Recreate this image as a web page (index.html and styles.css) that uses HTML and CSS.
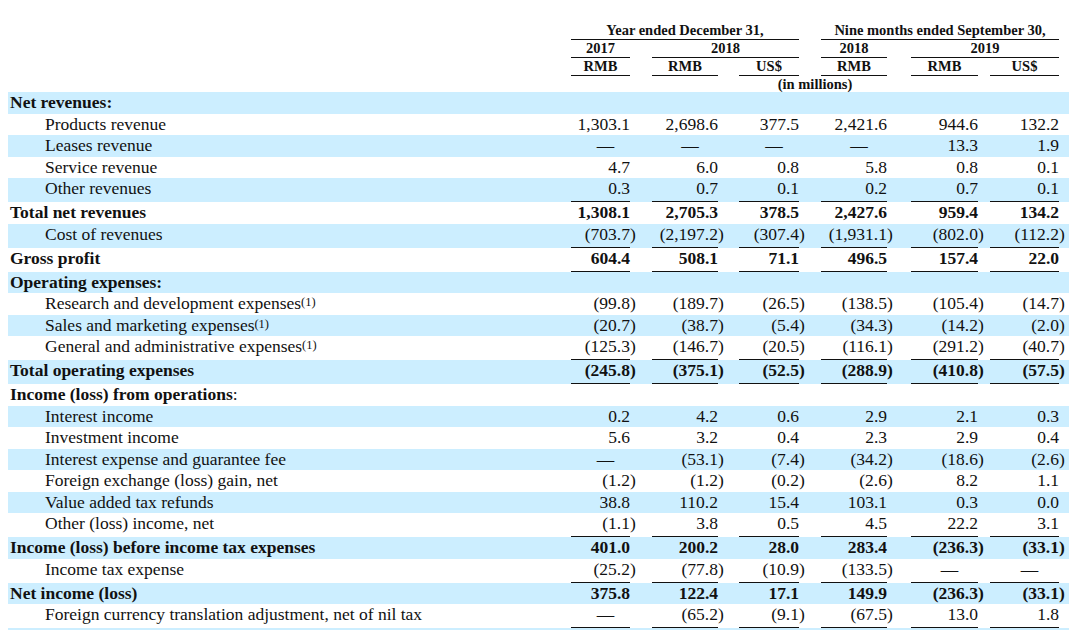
FILE: index.html
```html
<!DOCTYPE html>
<html lang="en">
<head>
<meta charset="utf-8">
<title>Selected consolidated statements of operations data</title>
<link rel="stylesheet" href="styles.css">
</head>
<body>
<div class="sheet">
  <div class="row hrow">
    <div class="lab"></div>
    <div class="c1 s3"><span class="h">Year ended December 31,</span></div>
    <div class="c4 s3"><span class="h">Nine months ended September 30,</span></div>
  </div>
  <div class="row hrow">
    <div class="lab"></div>
    <div class="c1"><span class="h">2017</span></div>
    <div class="c2 s2"><span class="h">2018</span></div>
    <div class="c4"><span class="h">2018</span></div>
    <div class="c5 s2"><span class="h">2019</span></div>
  </div>
  <div class="row hrow">
    <div class="lab"></div>
    <div class="c1"><span class="h">RMB</span></div>
    <div class="c2"><span class="h">RMB</span></div>
    <div class="c3"><span class="h">US$</span></div>
    <div class="c4"><span class="h">RMB</span></div>
    <div class="c5"><span class="h">RMB</span></div>
    <div class="c6"><span class="h">US$</span></div>
  </div>
  <div class="row hrow">
    <div class="lab"></div>
    <div class="c1 s6"><span class="h nol">(in millions)</span></div>
  </div>

  <div class="row shade"><div class="lab b">Net revenues:</div></div>
  <div class="row">
    <div class="lab ind">Products revenue</div>
    <div class="c1"><span class="n">1,303.1</span></div>
    <div class="c2"><span class="n">2,698.6</span></div>
    <div class="c3"><span class="n">377.5</span></div>
    <div class="c4"><span class="n">2,421.6</span></div>
    <div class="c5"><span class="n">944.6</span></div>
    <div class="c6"><span class="n">132.2</span></div>
  </div>
  <div class="row shade">
    <div class="lab ind">Leases revenue</div>
    <div class="c1"><span class="n d">—</span></div>
    <div class="c2"><span class="n d">—</span></div>
    <div class="c3"><span class="n d">—</span></div>
    <div class="c4"><span class="n d">—</span></div>
    <div class="c5"><span class="n">13.3</span></div>
    <div class="c6"><span class="n">1.9</span></div>
  </div>
  <div class="row">
    <div class="lab ind">Service revenue</div>
    <div class="c1"><span class="n">4.7</span></div>
    <div class="c2"><span class="n">6.0</span></div>
    <div class="c3"><span class="n">0.8</span></div>
    <div class="c4"><span class="n">5.8</span></div>
    <div class="c5"><span class="n">0.8</span></div>
    <div class="c6"><span class="n">0.1</span></div>
  </div>
  <div class="row shade ul">
    <div class="lab ind">Other revenues</div>
    <div class="c1"><span class="n">0.3</span></div>
    <div class="c2"><span class="n">0.7</span></div>
    <div class="c3"><span class="n">0.1</span></div>
    <div class="c4"><span class="n">0.2</span></div>
    <div class="c5"><span class="n">0.7</span></div>
    <div class="c6"><span class="n">0.1</span></div>
  </div>
  <div class="row bold">
    <div class="lab">Total net revenues</div>
    <div class="c1"><span class="n">1,308.1</span></div>
    <div class="c2"><span class="n">2,705.3</span></div>
    <div class="c3"><span class="n">378.5</span></div>
    <div class="c4"><span class="n">2,427.6</span></div>
    <div class="c5"><span class="n">959.4</span></div>
    <div class="c6"><span class="n">134.2</span></div>
  </div>
  <div class="row shade ul">
    <div class="lab ind">Cost of revenues</div>
    <div class="c1"><span class="n">(703.7<span class="rp">)</span></span></div>
    <div class="c2"><span class="n">(2,197.2<span class="rp">)</span></span></div>
    <div class="c3"><span class="n">(307.4<span class="rp">)</span></span></div>
    <div class="c4"><span class="n">(1,931.1<span class="rp">)</span></span></div>
    <div class="c5"><span class="n">(802.0<span class="rp">)</span></span></div>
    <div class="c6"><span class="n">(112.2<span class="rp">)</span></span></div>
  </div>
  <div class="row bold ul">
    <div class="lab">Gross profit</div>
    <div class="c1"><span class="n">604.4</span></div>
    <div class="c2"><span class="n">508.1</span></div>
    <div class="c3"><span class="n">71.1</span></div>
    <div class="c4"><span class="n">496.5</span></div>
    <div class="c5"><span class="n">157.4</span></div>
    <div class="c6"><span class="n">22.0</span></div>
  </div>
  <div class="row shade"><div class="lab b">Operating expenses:</div></div>
  <div class="row">
    <div class="lab ind">Research and development expenses<sup class="fn">(1)</sup></div>
    <div class="c1"><span class="n">(99.8<span class="rp">)</span></span></div>
    <div class="c2"><span class="n">(189.7<span class="rp">)</span></span></div>
    <div class="c3"><span class="n">(26.5<span class="rp">)</span></span></div>
    <div class="c4"><span class="n">(138.5<span class="rp">)</span></span></div>
    <div class="c5"><span class="n">(105.4<span class="rp">)</span></span></div>
    <div class="c6"><span class="n">(14.7<span class="rp">)</span></span></div>
  </div>
  <div class="row shade">
    <div class="lab ind">Sales and marketing expenses<sup class="fn">(1)</sup></div>
    <div class="c1"><span class="n">(20.7<span class="rp">)</span></span></div>
    <div class="c2"><span class="n">(38.7<span class="rp">)</span></span></div>
    <div class="c3"><span class="n">(5.4<span class="rp">)</span></span></div>
    <div class="c4"><span class="n">(34.3<span class="rp">)</span></span></div>
    <div class="c5"><span class="n">(14.2<span class="rp">)</span></span></div>
    <div class="c6"><span class="n">(2.0<span class="rp">)</span></span></div>
  </div>
  <div class="row ul">
    <div class="lab ind">General and administrative expenses<sup class="fn">(1)</sup></div>
    <div class="c1"><span class="n">(125.3<span class="rp">)</span></span></div>
    <div class="c2"><span class="n">(146.7<span class="rp">)</span></span></div>
    <div class="c3"><span class="n">(20.5<span class="rp">)</span></span></div>
    <div class="c4"><span class="n">(116.1<span class="rp">)</span></span></div>
    <div class="c5"><span class="n">(291.2<span class="rp">)</span></span></div>
    <div class="c6"><span class="n">(40.7<span class="rp">)</span></span></div>
  </div>
  <div class="row shade bold ul">
    <div class="lab">Total operating expenses</div>
    <div class="c1"><span class="n">(245.8<span class="rp">)</span></span></div>
    <div class="c2"><span class="n">(375.1<span class="rp">)</span></span></div>
    <div class="c3"><span class="n">(52.5<span class="rp">)</span></span></div>
    <div class="c4"><span class="n">(288.9<span class="rp">)</span></span></div>
    <div class="c5"><span class="n">(410.8<span class="rp">)</span></span></div>
    <div class="c6"><span class="n">(57.5<span class="rp">)</span></span></div>
  </div>
  <div class="row"><div class="lab"><b>Income (loss) from operations</b>:</div></div>
  <div class="row shade">
    <div class="lab ind">Interest income</div>
    <div class="c1"><span class="n">0.2</span></div>
    <div class="c2"><span class="n">4.2</span></div>
    <div class="c3"><span class="n">0.6</span></div>
    <div class="c4"><span class="n">2.9</span></div>
    <div class="c5"><span class="n">2.1</span></div>
    <div class="c6"><span class="n">0.3</span></div>
  </div>
  <div class="row">
    <div class="lab ind">Investment income</div>
    <div class="c1"><span class="n">5.6</span></div>
    <div class="c2"><span class="n">3.2</span></div>
    <div class="c3"><span class="n">0.4</span></div>
    <div class="c4"><span class="n">2.3</span></div>
    <div class="c5"><span class="n">2.9</span></div>
    <div class="c6"><span class="n">0.4</span></div>
  </div>
  <div class="row shade">
    <div class="lab ind">Interest expense and guarantee fee</div>
    <div class="c1"><span class="n d">—</span></div>
    <div class="c2"><span class="n">(53.1<span class="rp">)</span></span></div>
    <div class="c3"><span class="n">(7.4<span class="rp">)</span></span></div>
    <div class="c4"><span class="n">(34.2<span class="rp">)</span></span></div>
    <div class="c5"><span class="n">(18.6<span class="rp">)</span></span></div>
    <div class="c6"><span class="n">(2.6<span class="rp">)</span></span></div>
  </div>
  <div class="row">
    <div class="lab ind">Foreign exchange (loss) gain, net</div>
    <div class="c1"><span class="n">(1.2<span class="rp">)</span></span></div>
    <div class="c2"><span class="n">(1.2<span class="rp">)</span></span></div>
    <div class="c3"><span class="n">(0.2<span class="rp">)</span></span></div>
    <div class="c4"><span class="n">(2.6<span class="rp">)</span></span></div>
    <div class="c5"><span class="n">8.2</span></div>
    <div class="c6"><span class="n">1.1</span></div>
  </div>
  <div class="row shade">
    <div class="lab ind">Value added tax refunds</div>
    <div class="c1"><span class="n">38.8</span></div>
    <div class="c2"><span class="n">110.2</span></div>
    <div class="c3"><span class="n">15.4</span></div>
    <div class="c4"><span class="n">103.1</span></div>
    <div class="c5"><span class="n">0.3</span></div>
    <div class="c6"><span class="n">0.0</span></div>
  </div>
  <div class="row ul">
    <div class="lab ind">Other (loss) income, net</div>
    <div class="c1"><span class="n">(1.1<span class="rp">)</span></span></div>
    <div class="c2"><span class="n">3.8</span></div>
    <div class="c3"><span class="n">0.5</span></div>
    <div class="c4"><span class="n">4.5</span></div>
    <div class="c5"><span class="n">22.2</span></div>
    <div class="c6"><span class="n">3.1</span></div>
  </div>
  <div class="row shade bold">
    <div class="lab">Income (loss) before income tax expenses</div>
    <div class="c1"><span class="n">401.0</span></div>
    <div class="c2"><span class="n">200.2</span></div>
    <div class="c3"><span class="n">28.0</span></div>
    <div class="c4"><span class="n">283.4</span></div>
    <div class="c5"><span class="n">(236.3<span class="rp">)</span></span></div>
    <div class="c6"><span class="n">(33.1<span class="rp">)</span></span></div>
  </div>
  <div class="row ul">
    <div class="lab ind">Income tax expense</div>
    <div class="c1"><span class="n">(25.2<span class="rp">)</span></span></div>
    <div class="c2"><span class="n">(77.8<span class="rp">)</span></span></div>
    <div class="c3"><span class="n">(10.9<span class="rp">)</span></span></div>
    <div class="c4"><span class="n">(133.5<span class="rp">)</span></span></div>
    <div class="c5"><span class="n d">—</span></div>
    <div class="c6"><span class="n d">—</span></div>
  </div>
  <div class="row shade bold">
    <div class="lab">Net income (loss)</div>
    <div class="c1"><span class="n">375.8</span></div>
    <div class="c2"><span class="n">122.4</span></div>
    <div class="c3"><span class="n">17.1</span></div>
    <div class="c4"><span class="n">149.9</span></div>
    <div class="c5"><span class="n">(236.3<span class="rp">)</span></span></div>
    <div class="c6"><span class="n">(33.1<span class="rp">)</span></span></div>
  </div>
  <div class="row ul">
    <div class="lab ind">Foreign currency translation adjustment, net of nil tax</div>
    <div class="c1"><span class="n d">—</span></div>
    <div class="c2"><span class="n">(65.2<span class="rp">)</span></span></div>
    <div class="c3"><span class="n">(9.1<span class="rp">)</span></span></div>
    <div class="c4"><span class="n">(67.5<span class="rp">)</span></span></div>
    <div class="c5"><span class="n">13.0</span></div>
    <div class="c6"><span class="n">1.8</span></div>
  </div>
  <div class="row shade"><div class="lab">&nbsp;</div></div>
</div>
</body>
</html>
```

FILE: styles.css
```css
html, body {
  margin: 0;
  padding: 0;
  background: #ffffff;
}

body {
  font-family: "Liberation Serif", "Times New Roman", serif;
  color: #111111;
  overflow: hidden;
}

.sheet {
  width: 1061px;
  padding: 22px 0 0 8px;
}

.row {
  display: grid;
  grid-template-columns: 563px 59px 88px 81px 88px 91px 81px 10px;
  font-size: 17.5px;
  line-height: 21.5px;
}

.row > div {
  box-sizing: border-box;
  min-width: 0;
}

.shade {
  background: #cceeff;
}

.bold {
  font-weight: bold;
}

.lab {
  grid-column: 1;
  padding-left: 2px;
  white-space: nowrap;
}

.lab.ind {
  padding-left: 37px;
}

.b {
  font-weight: bold;
}

.c1 { grid-column: 2; padding-left: 0; }
.c2 { grid-column: 3; padding-left: 22px; }
.c3 { grid-column: 4; padding-left: 21px; }
.c4 { grid-column: 5; padding-left: 22px; }
.c5 { grid-column: 6; padding-left: 24px; }
.c6 { grid-column: 7; padding-left: 12px; }

.c1.s3 { grid-column: 2 / span 3; }
.c4.s3 { grid-column: 5 / span 3; }
.c2.s2 { grid-column: 3 / span 2; }
.c5.s2 { grid-column: 6 / span 2; }
.c1.s6 { grid-column: 2 / span 6; }

.n {
  display: block;
  text-align: right;
  white-space: nowrap;
}

.n.d {
  text-align: center;
  padding-left: 10px;
}

.rp {
  margin-right: -0.333em;
}

.ul .n {
  padding-bottom: 1.5px;
  border-bottom: 1px solid #111111;
}

.fn {
  font-size: 12.5px;
  vertical-align: 3px;
  line-height: 0;
}

/* header */
.hrow {
  font-size: 14.5px;
  line-height: 16px;
  font-weight: bold;
}

.h {
  display: block;
  text-align: center;
  white-space: nowrap;
  padding-bottom: 1px;
  border-bottom: 1px solid #111111;
}

.h.nol {
  border-bottom: none;
  padding-bottom: 0;
}
```
